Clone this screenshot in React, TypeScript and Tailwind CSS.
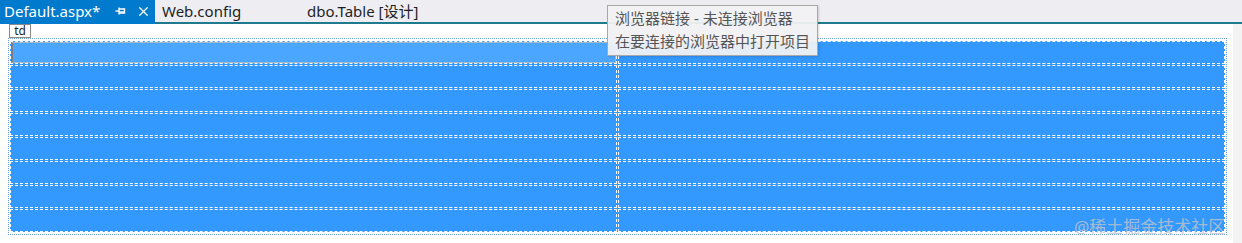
import { X } from "lucide-react";

const rows = Array.from({ length: 8 }, (_, i) => i);

function PinIcon() {
  return (
    <svg width="11" height="10" viewBox="0 0 11 10" fill="none" stroke="white" strokeWidth="1.4">
      <path d="M0.5 5h3.5" />
      <path d="M4 1.5v7" />
      <path d="M4 3h5.5v4H4" />
      <path d="M4 6h5.5" />
    </svg>
  );
}

export default function App() {
  return (
    <div
      className="relative h-[243px] w-[1242px] overflow-hidden bg-white"
      style={{ fontFamily: '"Noto Sans", "Noto Sans CJK SC", sans-serif' }}
    >
      {/* document tabs */}
      <div className="flex h-[24px] bg-[#eeeef2] text-[15px] leading-[22px]">
        <div className="flex w-[155px] items-start bg-[#007acc] pl-[4px] text-white">
          <span>Default.aspx*</span>
          <span className="ml-[15px] mt-[6px]">
            <PinIcon />
          </span>
          <X size={15} strokeWidth={2} className="ml-[10px] mt-[4px]" />
        </div>
        <div className="flex flex-1 border-b-2 border-[#1e7a8c] text-[#1e1e1e]">
          <span className="ml-[7px] w-[145px]">Web.config</span>
          <span>dbo.Table [设计]</span>
        </div>
      </div>

      <div className="flex h-[219px]">
        <div className="w-[1233px] bg-white">
          <div className="ml-[9px] flex h-[14px] w-[22px] items-center justify-center border border-[#8a8a8a] bg-white text-[12px] leading-none text-[#1e1e1e]">
            td
          </div>
          <div className="ml-[8px] w-[1219px] border border-dotted border-[#6f9fd8] px-[1px] pb-[2px] pt-[2px]">
            <div className="grid grid-cols-2 gap-[1px] bg-[#3399ff]">
              {rows.map((r) => (
                <div key={r} className="contents">
                  <div className="h-[23px] border border-dashed border-white bg-[#3399ff]">
                    {r === 0 && (
                      <div className="h-full border border-l-2 border-[#a9b9cc] border-l-[#7d7d7d] bg-[#4ba6ff]" />
                    )}
                  </div>
                  <div className="h-[23px] border border-dashed border-white bg-[#3399ff]" />
                </div>
              ))}
            </div>
          </div>
        </div>
        <div className="flex-1 bg-[#f3f3f3]" />
      </div>

      {/* browser link tooltip */}
      <div className="absolute left-[607px] top-[5px] h-[51px] w-[211px] border border-[#a8a8a8] bg-[#f1f1f3]/95 pl-[7px] pt-[1px] text-[15px] leading-[23px] text-[#555555] shadow-[1px_1px_2px_rgba(0,0,0,0.15)]">
        <div>浏览器链接 - 未连接浏览器</div>
        <div>在要连接的浏览器中打开项目</div>
      </div>

      {/* watermark */}
      <div className="absolute left-[1074px] top-[216px] text-[17px] leading-[22px] text-[rgba(195,195,200,0.8)]">
        @稀土掘金技术社区
      </div>
    </div>
  );
}
